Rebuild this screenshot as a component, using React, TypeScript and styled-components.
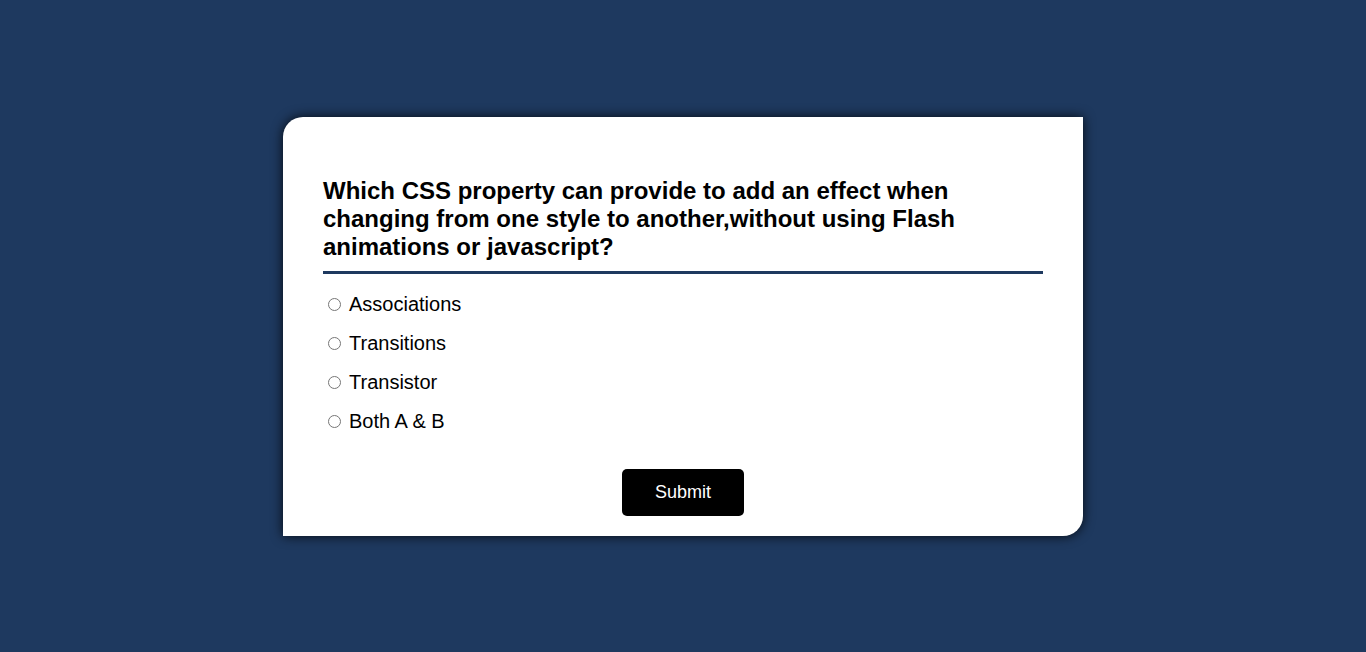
import { useState } from "react";
import { createGlobalStyle, styled } from "styled-components";

const options = ["Associations", "Transitions", "Transistor", "Both A & B"];

const GlobalStyle = createGlobalStyle`
  * {
    box-sizing: border-box;
  }

  body {
    margin: 0;
    background-color: #1e395f;
    font-family: "Liberation Sans", Arial, sans-serif;
  }
`;

const Quiz = () => {
  const [answer, setAnswer] = useState<string | null>(null);

  return (
    <Page>
      <GlobalStyle />
      <Card>
        <Question>
          Which CSS property can provide to add an effect when changing from
          one style to another,without using Flash animations or javascript?
        </Question>
        <Options>
          {options.map((option) => (
            <Option key={option}>
              <Radio
                type="radio"
                name="answer"
                checked={answer === option}
                onChange={() => setAnswer(option)}
              />
              <span>{option}</span>
            </Option>
          ))}
        </Options>
        <Footer>
          <SubmitButton>Submit</SubmitButton>
        </Footer>
      </Card>
    </Page>
  );
};

const Page = styled.div`
  display: flex;
  align-items: center;
  justify-content: center;

  width: 100%;
  min-height: 100vh;
`;

const Card = styled.div`
  width: 800px;
  height: 419px;

  padding: 60px 40px 20px;

  border-radius: 20px 0 20px 0;

  background-color: #ffffff;
  box-shadow: 0 0 12px rgba(0, 0, 0, 0.85);
`;

const Question = styled.h2`
  margin: 0;
  padding-bottom: 10px;

  border-bottom: 3px solid #1e395f;

  color: #000000;
  font-size: 24px;
  font-weight: 700;
  line-height: 28px;
`;

const Options = styled.div`
  display: flex;
  flex-direction: column;

  margin-top: 11px;
`;

const Option = styled.label`
  display: flex;
  align-items: center;

  height: 39px;

  color: #000000;
  font-size: 20px;
  cursor: pointer;
`;

const Radio = styled.input`
  width: 13px;
  height: 13px;

  margin: 0 8px 0 5px;
`;

const Footer = styled.div`
  display: flex;
  justify-content: center;

  margin-top: 28px;
`;

const SubmitButton = styled.button`
  width: 122px;
  height: 47px;

  border: none;
  border-radius: 5px;

  background-color: #000000;
  color: #ffffff;

  font-family: "Liberation Sans", Arial, sans-serif;
  font-size: 18px;
  cursor: pointer;
`;

export default Quiz;
